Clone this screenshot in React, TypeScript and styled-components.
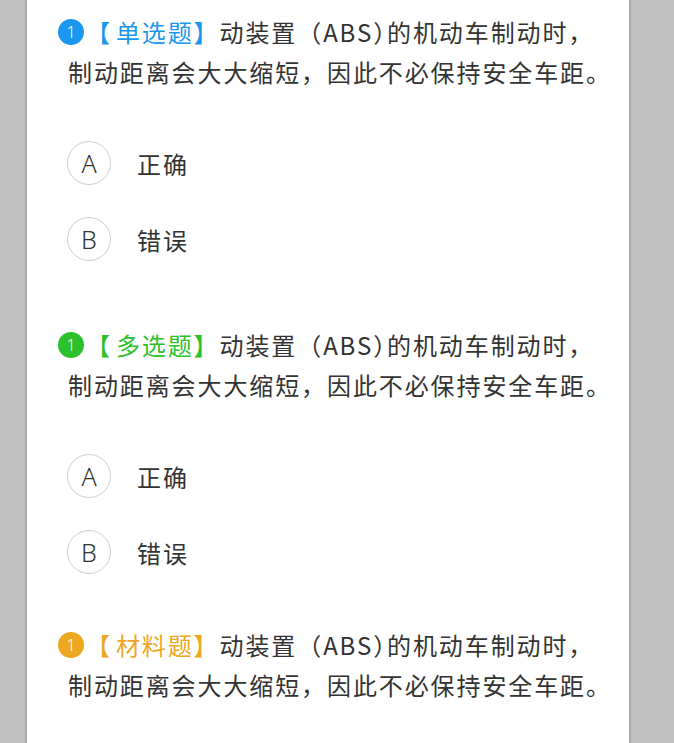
import React from 'react';
import styled, { createGlobalStyle } from 'styled-components';

type Kind = 'single' | 'multi' | 'material';

const kindColor: Record<Kind, string> = {
  single: '#1a97ef',
  multi: '#2cc12c',
  material: '#eda720',
};

const kindLabel: Record<Kind, string> = {
  single: '单选题',
  multi: '多选题',
  material: '材料题',
};

const stem = {
  before: '动装置（',
  abbr: 'ABS',
  after: '的机动车制动时，制动距离会大大缩短，因此不必保持安全车距。',
};

const questions: { kind: Kind; options: string[]; gap: number }[] = [
  { kind: 'single', options: ['正确', '错误'], gap: 64 },
  { kind: 'multi', options: ['正确', '错误'], gap: 51 },
  { kind: 'material', options: [], gap: 0 },
];

const App = () => {
  return (
    <>
      <GlobalStyle />
      <Page>
        <Panel>
          {questions.map((q, i) => (
            <Question key={i} gap={q.gap}>
              <Title>
                <Badge color={kindColor[q.kind]}>1</Badge>
                <Tag color={kindColor[q.kind]}>
                  【<TagLabel>{kindLabel[q.kind]}</TagLabel>】
                </Tag>
                {stem.before}
                {stem.abbr}
                <Half>）</Half>
                {stem.after}
              </Title>
              {q.options.length > 0 && (
                <Options>
                  {q.options.map((o, j) => (
                    <Option key={j}>
                      <Letter>{String.fromCharCode(65 + j)}</Letter>
                      <OptionText>{o}</OptionText>
                    </Option>
                  ))}
                </Options>
              )}
            </Question>
          ))}
        </Panel>
      </Page>
    </>
  );
};

export default App;

const GlobalStyle = createGlobalStyle`
  html, body {
    margin: 0;
    padding: 0;
    background: #c0c0c0;
    font-family: 'Noto Sans CJK SC', 'Noto Sans', sans-serif;
  }
`;

const Page = styled.div`
  display: flex;
  padding-left: 25px;
  height: 743px;
  overflow: hidden;
`;

const Panel = styled.div`
  width: 606px;
  background: #fff;
  border-left: 2px solid #acacac;
  border-right: 2px solid #acacac;
  padding: 12px 16px 0 31px;
  box-sizing: border-box;
`;

const Question = styled.div<{ gap: number }>`
  padding-bottom: ${(p) => p.gap}px;
`;

const Title = styled.div`
  padding-left: 10px;
  text-indent: -10px;
  font-size: 24px;
  line-height: 40px;
  letter-spacing: 1.9px;
  color: #333;
`;

const Badge = styled.span<{ color: string }>`
  display: inline-flex;
  align-items: center;
  justify-content: center;
  text-indent: 0;
  width: 26px;
  height: 26px;
  margin: 7px 2px 0 0;
  border-radius: 50%;
  background: ${(p) => p.color};
  color: #fff;
  font-family: 'Noto Sans', sans-serif;
  font-size: 16px;
  font-weight: 300;
  line-height: 26px;
  letter-spacing: 0;
  vertical-align: top;
`;

const Tag = styled.span<{ color: string }>`
  color: ${(p) => p.color};
`;

const TagLabel = styled.span`
  padding-left: 4px;
`;

const Half = styled.span`
  font-feature-settings: 'halt';
`;

const Options = styled.div`
  display: flex;
  flex-direction: column;
  gap: 32px;
  margin-top: 49px;
  padding-left: 9px;
`;

const Option = styled.div`
  display: flex;
  align-items: center;
  gap: 26px;
`;

const Letter = styled.div`
  width: 42px;
  height: 42px;
  border: 1.5px solid #cfcfcf;
  border-radius: 50%;
  display: flex;
  align-items: center;
  justify-content: center;
  font-family: 'Noto Sans', sans-serif;
  font-size: 25px;
  font-weight: 300;
  color: #333;
`;

const OptionText = styled.div`
  font-size: 24px;
  letter-spacing: 1.9px;
  color: #333;
`;
